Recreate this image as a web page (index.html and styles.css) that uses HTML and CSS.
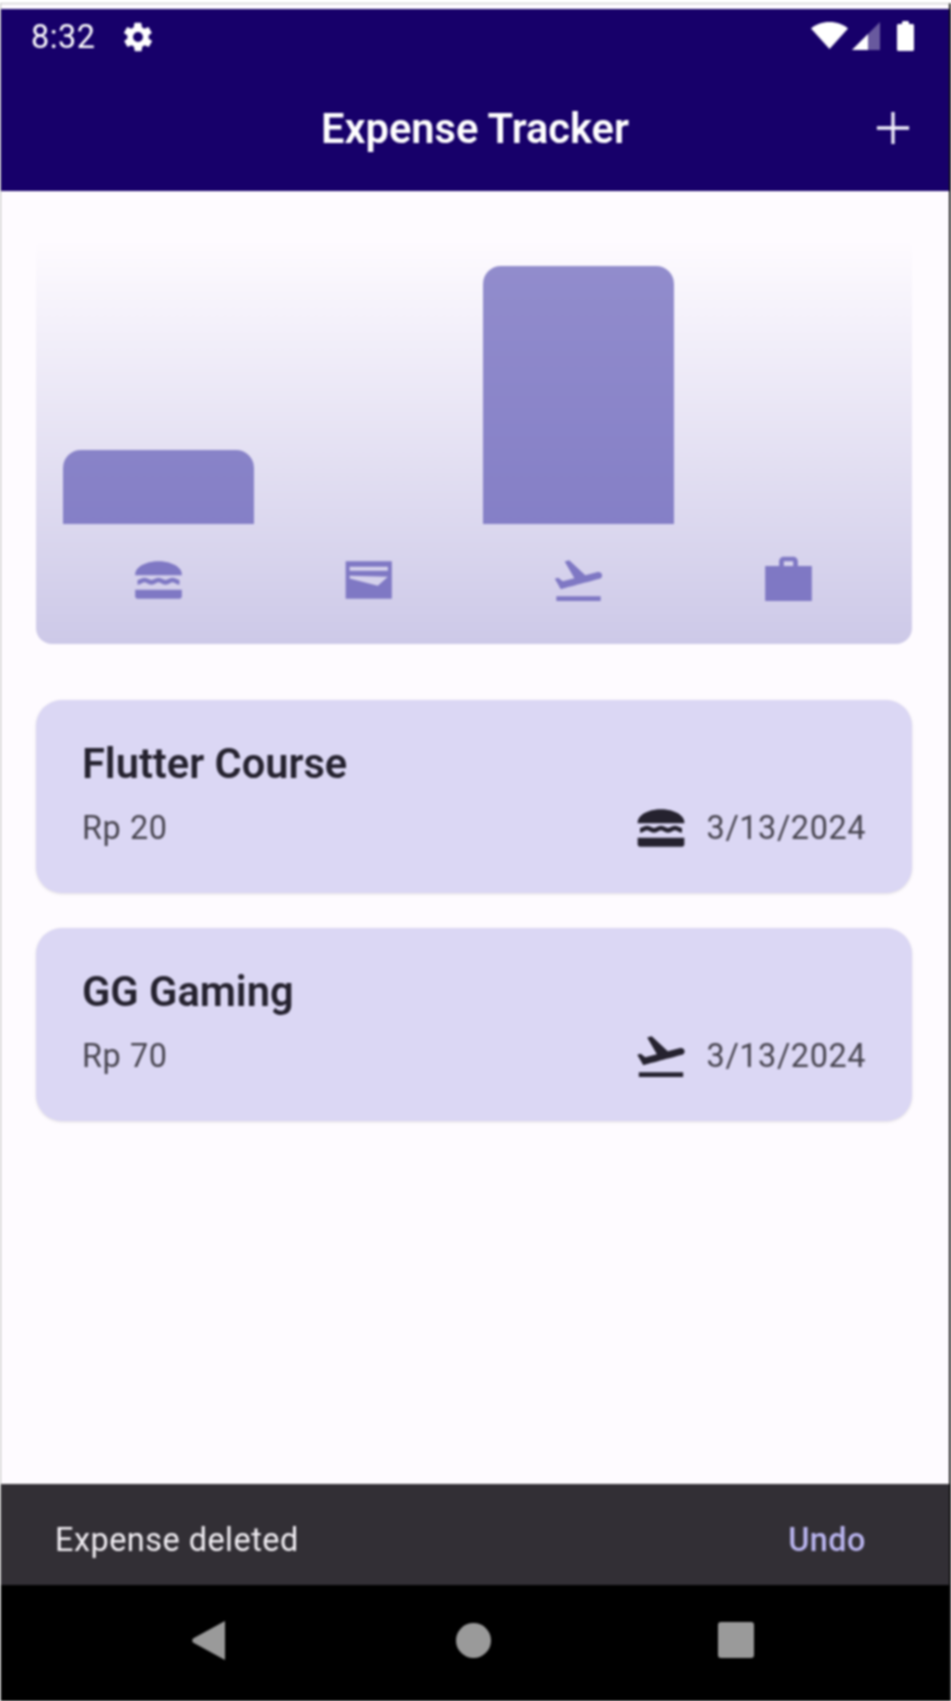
FILE: index.html
```html
<!DOCTYPE html>
<html lang="en">
<head>
  <meta charset="UTF-8">
  <meta name="viewport" content="width=device-width, initial-scale=1.0">
  <title>Expense Tracker</title>
  <link rel="stylesheet" href="styles.css">
</head>
<body>

  <svg class="icon-defs" aria-hidden="true">
    <symbol id="icon-food" viewBox="0 0 24 24">
      <path d="M22 10C22.300 6.700 17.700 4 12 4S1.700 6.700 2 10z"/>
      <path class="wave" d="M3 13c1.500 0 1.500-1 3-1s1.500 1 3 1 1.500-1 3-1 1.500 1 3 1 1.500-1 3-1 1.500 1 3 1"/>
      <path d="M2 16.200h20V19c0 .6-.5 1-1 1H3c-.5 0-1-.4-1-1z"/>
    </symbol>
    <symbol id="icon-leisure" viewBox="0 0 24 24">
      <path fill-rule="evenodd" d="M2.200 4H22v16H2.200zM3.900 6.300V8h16.400V6.300zM3.900 10.200v1.200L16 14.500l4.300-3.900z"/>
    </symbol>
    <symbol id="icon-travel" viewBox="0 0 24 24">
      <path d="M2.500 19h19v2h-19v-2zm19.570-9.360c-.21-.8-1.040-1.280-1.840-1.060L14.920 10l-6.900-6.430-1.930.51 4.140 7.170-4.970 1.330-1.970-1.540-1.450.39 2.590 4.490s7.120-1.900 16.570-4.430c.81-.23 1.280-1.050 1.070-1.850z"/>
    </symbol>
    <symbol id="icon-work" viewBox="0 0 24 24">
      <path fill-rule="evenodd" d="M22 6h-6V4c0-1.100-.9-2-2-2h-4c-1.100 0-2 .9-2 2v2H2v15h20zM14 6h-4V4h4z"/>
    </symbol>
  </svg>

  <div class="device">

    <div class="status-bar">
      <div class="status-left">
        <span class="status-time">8:32</span>
        <svg class="status-gear" viewBox="0 0 24 24"><path d="M19.400 13c.1-.3.100-.7.100-1s0-.7-.1-1l2.100-1.600c.2-.2.200-.4.100-.6l-2-3.500c-.1-.2-.4-.3-.6-.2l-2.500 1c-.5-.4-1.100-.7-1.700-1l-.4-2.700c0-.2-.2-.4-.5-.4h-4c-.3 0-.5.200-.5.400l-.4 2.700c-.6.300-1.200.6-1.700 1l-2.500-1c-.2-.1-.5 0-.6.200l-2 3.500c-.1.200-.1.400.1.600L4.600 11c-.1.300-.1.700-.1 1s0 .7.100 1l-2.100 1.600c-.2.200-.2.400-.1.600l2 3.500c.1.200.4.300.6.200l2.500-1c.5.400 1.100.7 1.700 1l.4 2.700c0 .2.200.4.500.4h4c.3 0 .5-.2.500-.4l.4-2.700c.6-.3 1.200-.6 1.700-1l2.500 1c.2.100.5 0 .6-.2l2-3.500c.1-.2.100-.4-.1-.6zM12 15.500a3.500 3.500 0 1 1 0-7 3.500 3.500 0 0 1 0 7z"/></svg>
      </div>
      <div class="status-right">
        <svg class="status-wifi" viewBox="0 0 37 27"><path d="M18.500 27 0 6.500C4.500 2.500 11 0 18.500 0S32.500 2.500 37 6.500z"/></svg>
        <svg class="status-signal" viewBox="0 0 28 28">
          <path class="signal-empty" d="M28 0v28H0z"/>
          <path d="M16 12v16H0z"/>
        </svg>
        <svg class="status-battery" viewBox="0 0 17 30"><path d="M5 3V1.500C5 .7 5.700 0 6.500 0h4c.8 0 1.500.7 1.500 1.500V3h3.500c.8 0 1.500.7 1.500 1.500v24c0 .8-.7 1.500-1.500 1.500h-14C.7 30 0 29.300 0 28.500v-24C0 3.700.7 3 1.500 3z"/></svg>
      </div>
    </div>

    <header class="app-bar">
      <h1 class="app-title">Expense Tracker</h1>
      <svg class="add-icon" viewBox="0 0 24 24"><path d="M18.900 12.700h-6.200v6.200h-1.400v-6.200H5.100v-1.400h6.200V5.100h1.400v6.200h6.200z"/></svg>
    </header>

    <main class="content">
      <section class="chart">
        <div class="chart-bars">
          <div class="bar-slot"><div class="bar" style="height: 28.6%"></div></div>
          <div class="bar-slot"></div>
          <div class="bar-slot"><div class="bar" style="height: 100%"></div></div>
          <div class="bar-slot"></div>
        </div>
        <div class="chart-icons">
          <svg class="icon"><use href="#icon-food"/></svg>
          <svg class="icon"><use href="#icon-leisure"/></svg>
          <svg class="icon"><use href="#icon-travel"/></svg>
          <svg class="icon"><use href="#icon-work"/></svg>
        </div>
      </section>

      <div class="expense-list">
        <article class="expense-card">
          <h2 class="expense-title">Flutter Course</h2>
          <div class="expense-row">
            <span class="expense-amount">Rp 20</span>
            <div class="expense-meta">
              <svg class="icon"><use href="#icon-food"/></svg>
              <span class="expense-date">3/13/2024</span>
            </div>
          </div>
        </article>
        <article class="expense-card">
          <h2 class="expense-title">GG Gaming</h2>
          <div class="expense-row">
            <span class="expense-amount">Rp 70</span>
            <div class="expense-meta">
              <svg class="icon"><use href="#icon-travel"/></svg>
              <span class="expense-date">3/13/2024</span>
            </div>
          </div>
        </article>
      </div>
    </main>

    <div class="snackbar">
      <span class="snackbar-text">Expense deleted</span>
      <span class="snackbar-action">Undo</span>
    </div>

    <nav class="nav-bar">
      <div class="nav-slot"><svg class="nav-back" viewBox="0 0 33 39"><path d="M33 0v39L1 21.500c-1-1-1-3 0-4z"/></svg></div>
      <div class="nav-slot"><div class="nav-home"></div></div>
      <div class="nav-slot"><div class="nav-recent"></div></div>
    </nav>

  </div>

</body>
</html>
```

FILE: styles.css
```css
* {
  box-sizing: border-box;
}

html, body {
  height: 100%;
}

body {
  margin: 0;
  font-family: Roboto, "Noto Sans", sans-serif;
  background: #fff;
  overflow: hidden;
}

.icon-defs {
  display: none;
}

.device {
  display: flex;
  flex-direction: column;
  height: 1698px;
  margin-top: 3px;
  padding-top: 5px;
  border-top: 1px solid #c4c4c4;
  border-left: 1px solid #b5b5b5;
  border-right: 2px solid #111;
  background: #fefbff;
  filter: blur(0.9px);
}

/* status bar */
.status-bar {
  display: flex;
  justify-content: space-between;
  align-items: center;
  height: 56px;
  padding: 0 35px 0 30px;
  background: #17006a;
  color: #fff;
  fill: #fff;
}

.status-left, .status-right {
  display: flex;
  align-items: center;
}

.status-right {
  margin-bottom: 3px;
}

.status-time {
  font-size: 32.400px;
  letter-spacing: 0.500px;
}

.status-gear {
  width: 34px;
  height: 34px;
  margin-left: 26px;
}

.status-wifi {
  width: 37px;
  height: 27px;
}

.status-signal {
  width: 28px;
  height: 28px;
  margin-left: 4px;
}

.signal-empty {
  opacity: 0.35;
}

.status-battery {
  width: 17px;
  height: 30px;
  margin-left: 17px;
}

/* app bar */
.app-bar {
  position: relative;
  display: flex;
  justify-content: center;
  align-items: center;
  height: 126px;
  background: #17006a;
}

.app-title {
  margin: 0;
  color: #fff;
  font-size: 41.600px;
  font-weight: 600;
}

.add-icon {
  position: absolute;
  right: 28px;
  top: 35px;
  width: 56px;
  height: 56px;
  fill: #f1effb;
}

/* chart */
.content {
  flex: 1;
  padding: 49px 37px 0 35px;
}

.chart {
  height: 404px;
  padding: 0 28px 36px 27px;
  border-radius: 0 0 16px 16px;
  background: linear-gradient(to bottom, #fefbff 0%, #cdc9e8 100%);
}

.chart-bars {
  display: flex;
  gap: 19px;
  height: 284px;
  padding-top: 26px;
}

.bar-slot {
  flex: 1;
  display: flex;
  align-items: flex-end;
}

.bar {
  width: 100%;
  border-radius: 18px 18px 0 0;
  background: rgba(75, 68, 172, 0.6);
}

.chart-icons {
  display: flex;
  gap: 19px;
  margin-top: 28px;
  color: #7f78c4;
}

.chart-icons .icon {
  flex: 1;
}

.icon {
  width: 56px;
  height: 56px;
  fill: currentColor;
}

.wave {
  fill: none;
  stroke: currentColor;
  stroke-width: 2;
}

/* expense cards */
.expense-list {
  display: flex;
  flex-direction: column;
  gap: 35px;
  margin-top: 56px;
}

.expense-card {
  height: 193px;
  padding: 41px 46px 0 46px;
  border-radius: 26px;
  background: #dbd7f4;
  box-shadow: 0 1px 3px rgba(0, 0, 0, 0.12);
  color: #25222f;
}

.expense-title {
  margin: 0;
  font-size: 41.600px;
  line-height: 46px;
  font-weight: 600;
}

.expense-row {
  display: flex;
  justify-content: space-between;
  align-items: center;
  margin-top: 13px;
}

.expense-amount, .expense-date {
  color: #47444f;
  font-size: 32.400px;
  letter-spacing: 0.580px;
}

.expense-meta {
  display: flex;
  align-items: center;
  gap: 18px;
}

/* snackbar */
.snackbar {
  display: flex;
  justify-content: space-between;
  align-items: center;
  height: 101px;
  padding: 11px 83px 0 54px;
  background: #322f35;
  font-size: 32.400px;
  letter-spacing: 0.500px;
}

.snackbar-text {
  color: #f2eff4;
}

.snackbar-action {
  color: #b9b4ee;
  font-weight: 500;
}

/* nav bar */
.nav-bar {
  display: flex;
  justify-content: center;
  align-items: center;
  height: 116px;
  padding: 0 4px 6px 0;
  background: #000;
}

.nav-slot {
  display: flex;
  justify-content: center;
  width: 263px;
}

.nav-back {
  width: 33px;
  height: 39px;
  margin-right: 4px;
  fill: #9a9a9a;
}

.nav-home {
  width: 35px;
  height: 35px;
  border-radius: 50%;
  background: #9a9a9a;
}

.nav-recent {
  width: 36px;
  height: 36px;
  border-radius: 3px;
  background: #9a9a9a;
}
```
